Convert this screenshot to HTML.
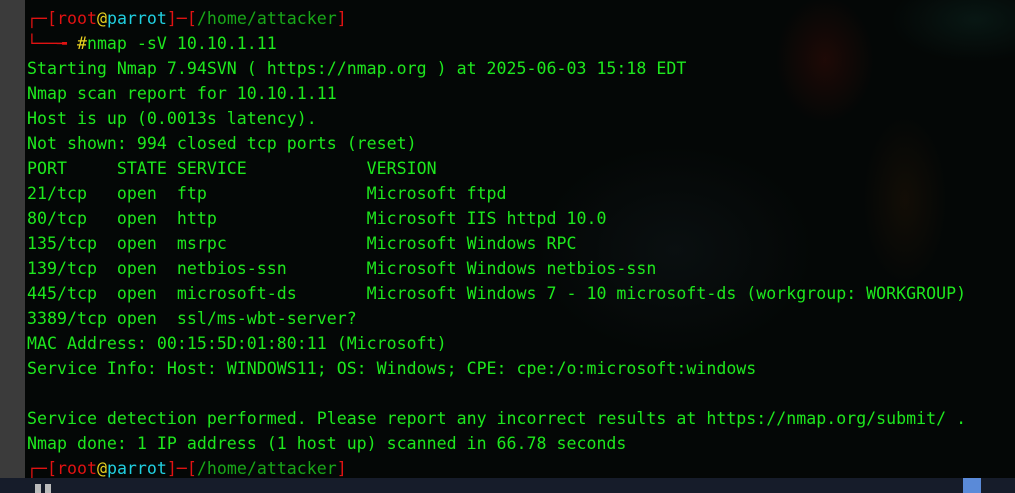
<!DOCTYPE html>
<html><head><meta charset="utf-8"><style>
html,body{margin:0;padding:0;width:1015px;height:493px;overflow:hidden;background:#050807;}
#left{position:absolute;left:0;top:0;width:25px;height:478px;background:#3b3b3b;}
#term{position:absolute;left:25px;top:0;width:990px;height:478px;
background:
radial-gradient(ellipse 70px 90px at 800px 60px, rgba(90,15,8,0.3), transparent 70%),
radial-gradient(ellipse 60px 120px at 880px 200px, rgba(100,50,10,0.15), transparent 70%),
radial-gradient(ellipse 120px 60px at 950px 20px, rgba(20,70,60,0.25), transparent 70%),
radial-gradient(ellipse 200px 150px at 650px 250px, rgba(20,30,35,0.35), transparent 70%),
#040706;}
pre{position:absolute;left:2px;top:6px;margin:0;font-family:"DejaVu Sans Mono","Liberation Mono",monospace;font-size:16.6px;line-height:25px;color:#1ee81e;}
.r{color:#e01212}.y{color:#e8d020}.c{color:#20d0e0}.g{color:#18a818}
#bar{position:absolute;left:0;top:478px;width:1015px;height:15px;background:#161c2a;}
#bar .b1{position:absolute;left:35px;top:6px;width:6px;height:9px;background:#bbb}
#bar .b2{position:absolute;left:45px;top:6px;width:6px;height:9px;background:#bbb}
#bar .sel{position:absolute;left:963px;top:0;width:18px;height:15px;background:#5a8ad8}
</style></head><body>
<div id="left"></div>
<div id="term"><pre><span class="r">┌─[</span><span class="r">root</span><span class="y">@</span><span class="c">parrot</span><span class="r">]─[</span><span class="g">/home/attacker</span><span class="r">]</span>
<span class="r">└──╼ </span><span class="y">#</span>nmap -sV 10.10.1.11
Starting Nmap 7.94SVN ( https://nmap.org ) at 2025-06-03 15:18 EDT
Nmap scan report for 10.10.1.11
Host is up (0.0013s latency).
Not shown: 994 closed tcp ports (reset)
PORT     STATE SERVICE            VERSION
21/tcp   open  ftp                Microsoft ftpd
80/tcp   open  http               Microsoft IIS httpd 10.0
135/tcp  open  msrpc              Microsoft Windows RPC
139/tcp  open  netbios-ssn        Microsoft Windows netbios-ssn
445/tcp  open  microsoft-ds       Microsoft Windows 7 - 10 microsoft-ds (workgroup: WORKGROUP)
3389/tcp open  ssl/ms-wbt-server?
MAC Address: 00:15:5D:01:80:11 (Microsoft)
Service Info: Host: WINDOWS11; OS: Windows; CPE: cpe:/o:microsoft:windows

Service detection performed. Please report any incorrect results at https://nmap.org/submit/ .
Nmap done: 1 IP address (1 host up) scanned in 66.78 seconds
<span class="r">┌─[</span><span class="r">root</span><span class="y">@</span><span class="c">parrot</span><span class="r">]─[</span><span class="g">/home/attacker</span><span class="r">]</span></pre></div>
<div id="bar"><div class="b1"></div><div class="b2"></div><div class="sel"></div></div>
</body></html>
